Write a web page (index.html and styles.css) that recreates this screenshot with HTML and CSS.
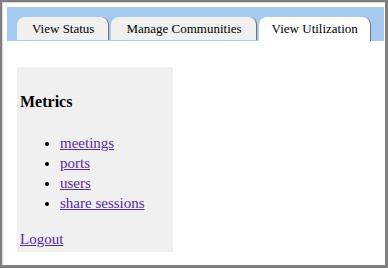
FILE: index.html
```html
<!DOCTYPE html>
<html lang="en">
<head>
    <meta charset="UTF-8">
    <title>View Utilization</title>
    <link rel="stylesheet" href="styles.css">
</head>
<body>
    <div class="frame">
        <div class="tab-bar">
            <a class="tab">View Status</a>
            <a class="tab">Manage Communities</a>
            <a class="tab active">View Utilization</a>
        </div>
        <div class="page">
            <div class="sidebar">
                <h3 class="sidebar-title">Metrics</h3>
                <ul class="metric-list">
                    <li><a href="#meetings">meetings</a></li>
                    <li><a href="#ports">ports</a></li>
                    <li><a href="#users">users</a></li>
                    <li><a href="#sessions">share sessions</a></li>
                </ul>
                <a class="logout" href="#logout">Logout</a>
            </div>
        </div>
    </div>
</body>
</html>
```

FILE: styles.css
```css
html, body {
    margin: 0;
    padding: 0;
}
body {
    font-family: "Liberation Serif", "Times New Roman", serif;
    color: #000;
    background: #fff;
}
.frame {
    box-sizing: border-box;
    width: 388px;
    height: 268px;
    border-style: solid;
    border-color: #808080;
    border-width: 2px 3px 3px 2px;
    padding: 5px 1px 0 5px;
    overflow: hidden;
    box-shadow: inset 1px 1px 0 #d8d8d8;
}
.tab-bar {
    display: flex;
    align-items: flex-start;
    gap: 2px;
    height: 34px;
    box-sizing: border-box;
    padding: 10px 0 0 10px;
    background: #a6caf0;
}
.tab {
    display: flex;
    align-items: center;
    height: 23px;
    padding: 0 14px 0 15px;
    font-size: 13px;
    color: #000;
    background: #f0f0f0;
    border-right: 1px solid #6f6f6f;
    border-radius: 8px 8px 0 0;
    white-space: nowrap;
}
.tab.active {
    height: 24px;
    padding: 0 12px 0 13px;
    background: #fff;
}
.page {
    padding: 26px 0 0 10px;
}
.sidebar {
    width: 150px;
    padding: 26px 3px 3px 3px;
    background: #f0f0f0;
    font-size: 15px;
}
.sidebar a {
    color: #5a2a9a;
    text-decoration: underline;
}
.sidebar-title {
    margin: 0;
    font-size: 16px;
    line-height: 18px;
    font-weight: bold;
}
.metric-list {
    margin: 22px 0 0 0;
    padding-left: 40px;
}
.metric-list li {
    line-height: 20px;
}
.logout {
    display: block;
    margin-top: 16px;
    line-height: 20px;
}
```
